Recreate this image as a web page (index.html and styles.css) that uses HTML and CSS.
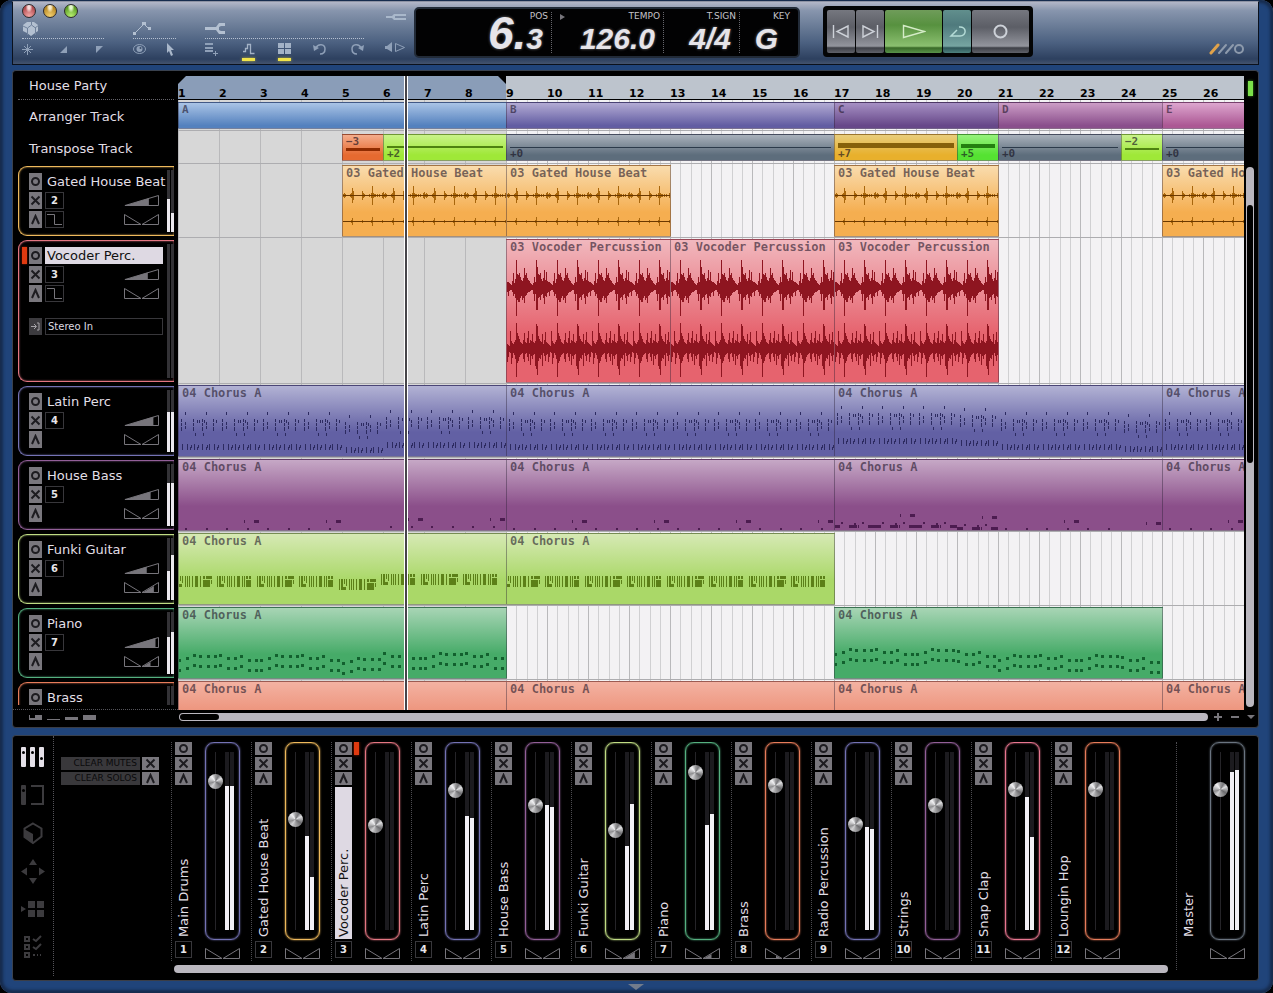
FILE: index.html
```html
<!DOCTYPE html>
<html lang="en">
<head>
<meta charset="utf-8">
<title>House Party</title>
<link rel="stylesheet" href="styles.css">
</head>
<body>
<div class="app">
  <header class="topbar">
    <div class="tools">
      <div class="tools-main">
        <div class="lights">
          <button class="light light-red" aria-label="Close"></button>
          <button class="light light-amber" aria-label="Minimise"></button>
          <button class="light light-green" aria-label="Zoom"></button>
        </div>
        <div class="groups">
          <div class="group group-a">
            <div class="group-head">
              <svg width="18" height="14" viewBox="0 0 18 14"><path fill="#b3c0d1" d="M1 3l4-3h7l4 3v6l-3 2-4 3-4-3-4-2z"/><path fill="none" stroke="#6f819b" d="M5.500 13V6l4-3 4 3v7M1 4l4 2M9.500 3V0M13 6l4-3"/></svg>
            </div>
            <div class="group-row">
              <button class="tool" aria-label="New"><svg width="11" height="11" viewBox="0 0 11 11"><path stroke="#8fa0b8" d="M5.500 0v11M0 5.500h11M2 2l7 7M9 2l-7 7"/></svg></button>
              <button class="tool" aria-label="Fade in"><svg width="11" height="11" viewBox="0 0 11 11"><path fill="#8fa0b8" d="M9 2v7H2z"/></svg></button>
              <button class="tool" aria-label="Fade out"><svg width="11" height="11" viewBox="0 0 11 11"><path fill="#8fa0b8" d="M3 2h7L3 9z"/></svg></button>
            </div>
          </div>
          <div class="group group-b">
            <div class="group-head">
              <svg width="18" height="14" viewBox="0 0 18 14"><path fill="none" stroke="#b3c0d1" d="M2 11l9-9 5 5"/><path fill="#b3c0d1" d="M0 10h3v3H0zM9 0h4v3H9zM15 5h3v3h-3z"/></svg>
            </div>
            <div class="group-row">
              <button class="tool" aria-label="View"><svg width="13" height="12" viewBox="0 0 13 12"><ellipse cx="6.500" cy="6" rx="6" ry="4.500" fill="none" stroke="#8fa0b8"/><circle cx="6.500" cy="6" r="3" fill="#8fa0b8"/><circle cx="7.500" cy="5" r="1" fill="#3b4e6a"/></svg></button>
              <button class="tool" aria-label="Select"><svg width="9" height="13" viewBox="0 0 9 13"><path fill="#a9b7ca" d="M1 0l7 7H5l2 5-2 1-2-5-2 2z"/></svg></button>
            </div>
          </div>
          <div class="group group-c">
            <div class="group-head">
              <svg width="21" height="14" viewBox="0 0 21 14"><path fill="#b3c0d1" d="M0 5h11l3-4h6v3h-4l-2 1v3l2 1h4v3h-6l-3-4H0z"/></svg>
            </div>
            <div class="group-row">
              <button class="tool" aria-label="Add to list"><svg width="14" height="14" viewBox="0 0 14 14"><path fill="#8fa0b8" d="M0 1h8v2H0zM0 5h8v2H0zM0 8h8v2H0zM10 9h1v5h-1zM8 11h5v1H8z"/></svg></button>
              <button class="tool tool-on" aria-label="Automation"><svg width="13" height="12" viewBox="0 0 13 12"><path fill="none" stroke="#a3b2c6" stroke-width="1.300" d="M1 8.500h2.500v-3h2v-4h3v9h4"/></svg></button>
              <button class="tool tool-on" aria-label="Snap"><svg width="13" height="12" viewBox="0 0 13 12"><path fill="#a3b2c6" d="M0 0h6v5H0zM7 0h6v5H7zM0 6h6v5H0zM7 6h6v5H7z"/></svg></button>
              <button class="tool" aria-label="Undo"><svg width="14" height="13" viewBox="0 0 14 13"><path fill="none" stroke="#8fa0b8" stroke-width="1.500" d="M3 5c2-5 9-4 9 1 0 4-3 5-5 5"/><path fill="#8fa0b8" d="M0 2l1 6 5-3z"/></svg></button>
              <button class="tool" aria-label="Redo"><svg width="14" height="13" viewBox="0 0 14 13"><path fill="none" stroke="#8fa0b8" stroke-width="1.500" d="M11 5C9 0 2 1 2 6c0 4 3 5 5 5"/><path fill="#8fa0b8" d="M14 2l-1 6-5-3z"/></svg></button>
            </div>
          </div>
        </div>
      </div>
      <div class="tools-side">
        <button class="tool" aria-label="Plug"><svg width="20" height="9" viewBox="0 0 20 9"><path fill="#a9b8cb" d="M0 3h6l2-2h12v2H9v2h11v2H8L6 5H0z"/></svg></button>
        <button class="tool" aria-label="Preview"><svg width="21" height="11" viewBox="0 0 21 11"><path fill="#8fa0b8" d="M0 4h2l5-4v10L2 7H0z"/><path fill="none" stroke="#8fa0b8" d="M10.500 1.500l9 4-9 4z"/></svg></button>
      </div>
    </div>

    <div class="lcd">
      <div class="lcd-cell lcd-pos"><span class="lcd-label">POS</span><span class="lcd-value"><b class="lcd-big">6.</b>3</span></div>
      <div class="lcd-cell lcd-tempo"><span class="lcd-label"><i class="lcd-play"></i>TEMPO</span><span class="lcd-value">126.0</span></div>
      <div class="lcd-cell lcd-sign"><span class="lcd-label">T.SIGN</span><span class="lcd-value">4/4</span></div>
      <div class="lcd-cell lcd-key"><span class="lcd-label">KEY</span><span class="lcd-value">G</span></div>
    </div>

    <div class="transport">
      <button class="tbtn" aria-label="Previous"><svg width="18" height="15" viewBox="0 0 18 15"><path fill="none" stroke="#cdd1d8" stroke-width="1.400" d="M1.500 1v13M16 2v11L5 7.500z"/></svg></button>
      <button class="tbtn" aria-label="Next"><svg width="18" height="15" viewBox="0 0 18 15"><path fill="none" stroke="#cdd1d8" stroke-width="1.400" d="M16.500 1v13M2 2v11l11-5.500z"/></svg></button>
      <button class="tbtn tbtn-wide tbtn-play" aria-label="Play"><svg width="24" height="15" viewBox="0 0 24 15"><path fill="none" stroke="#d5ecc8" stroke-width="1.400" d="M1.500 1.500v12l21-6z"/></svg></button>
      <button class="tbtn tbtn-loop" aria-label="Loop"><svg width="19" height="15" viewBox="0 0 19 15"><path fill="none" stroke="#b4dbd6" stroke-width="1.500" d="M11 3c8-1 8 9 1 9H3l6-6"/></svg></button>
      <button class="tbtn tbtn-wide" aria-label="Record"><svg width="15" height="15" viewBox="0 0 15 15"><circle cx="7.500" cy="7.500" r="6" fill="none" stroke="#cdd1d8" stroke-width="2"/></svg></button>
    </div>
    <svg class="logo" width="36" height="12" viewBox="0 0 36 12"><g fill="none" stroke-linecap="round"><path stroke="#e0a24a" stroke-width="3" d="M2 10l7-8"/><path stroke="#8d9aac" stroke-width="2" d="M10 10l7-8M17 10l7-8"/><circle cx="30" cy="6" r="4" stroke="#8d9aac" stroke-width="2"/></g></svg>
  </header>

  <main class="panel arrange">
    <aside class="heads">
      <h1 class="head-line head-song">House Party</h1>
      <div class="head-line head-arranger">Arranger Track</div>
      <div class="head-line head-transpose">Transpose Track</div>
      <div class="head-list" id="heads"></div>
    </aside>
    <section class="timeline">
      <div class="ruler" id="ruler"></div>
      <div class="lane lane-arranger" id="arranger"></div>
      <div class="lane lane-transpose" id="transpose"></div>
      <div class="lanes" id="lanes"></div>
      <div class="playhead"></div>
    </section>
    <div class="side">
      <div class="led"></div>
      <div class="vscroll"><div class="vthumb"></div></div>
    </div>
    <div class="sizes">
      <svg width="68" height="5" viewBox="0 0 68 5"><path fill="#77757b" d="M0 0h1v3h5V0h7v5H0zM18 4h13v1H18zM36 2h13v3H36zM54 0h13v5H54z"/></svg>
    </div>
    <div class="hscroll"><div class="hthumb"></div></div>
    <div class="zooms">
      <button class="zbtn" aria-label="Zoom in"><svg width="8" height="8" viewBox="0 0 8 8"><path fill="#77757b" d="M3 0h2v3h3v2H5v3H3V5H0V3h3z"/></svg></button>
      <button class="zbtn" aria-label="Zoom out"><svg width="8" height="8" viewBox="0 0 8 8"><path fill="#77757b" d="M0 3h8v2H0z"/></svg></button>
      <button class="zbtn" aria-label="More"><svg width="8" height="8" viewBox="0 0 8 8"><path fill="#77757b" d="M0 2h8L4 6z"/></svg></button>
    </div>
  </main>

  <section class="panel mixer">
    <nav class="tabs">
      <button class="tab" aria-label="Mixer"><svg width="24" height="20" viewBox="0 0 24 20"><g fill="#e4e0e8"><rect width="5" height="20" rx="1"/><rect x="9" width="5" height="20" rx="1"/><rect x="18" width="5" height="20" rx="1"/></g><g fill="#000"><circle cx="2.500" cy="5.500" r="1.500"/><circle cx="11.500" cy="5.500" r="1.500"/><circle cx="20.500" cy="11.500" r="1.500"/></g></svg></button>
      <button class="tab" aria-label="Channel"><svg width="24" height="20" viewBox="0 0 24 20"><rect width="5" height="20" rx="1" fill="#3c3b3e"/><circle cx="2.500" cy="5.500" r="1.500"/><path fill="none" stroke="#3c3b3e" stroke-width="2" d="M10 1h12v18H10"/></svg></button>
      <button class="tab" aria-label="Devices"><svg width="20" height="23" viewBox="0 0 20 23"><path fill="none" stroke="#3c3b3e" stroke-width="2" d="M10 1.500l8.500 5v8L10 21 1.500 15V6.500z"/><path fill="#3c3b3e" d="M1 7l9 5v10l-9-7z"/></svg></button>
      <button class="tab" aria-label="Move"><svg width="24" height="25" viewBox="0 0 24 25"><path fill="#3c3b3e" d="M12 0l4 6H8zM12 25l4-6H8zM0 12.500l6-4v8zM24 12.500l-6-4v8z"/></svg></button>
      <button class="tab" aria-label="Pads"><svg width="24" height="16" viewBox="0 0 24 16"><path fill="#3c3b3e" d="M0 5l5 3-5 3zM7 0h7v7H7zM16 0h7v7h-7zM7 9h7v7H7zM16 9h7v7h-7z"/></svg></button>
      <button class="tab" aria-label="Checklist"><svg width="20" height="24" viewBox="0 0 20 24"><path fill="none" stroke="#3c3b3e" stroke-width="2" d="M2 2h4v4H2zM2 10h4v4H2zM2 18h4v4H2zM10 4l3 2 5-5M10 12l3 2 5-5M10 20h2M14 20h1M17 20h1"/></svg></button>
    </nav>
    <div class="clears">
      <button class="clear"><span class="clear-text">CLEAR MUTES</span><span class="chip" data-glyph="x"></span></button>
      <button class="clear"><span class="clear-text">CLEAR SOLOS</span><span class="chip" data-glyph="a"></span></button>
    </div>
    <div class="desk">
      <div class="strips" id="strips"></div>
      <div class="mscroll"></div>
    </div>
    <div class="master" id="master"></div>
  </section>
  <button class="collapse" aria-label="Collapse"><svg width="16" height="6" viewBox="0 0 16 6"><path fill="#727c8c" d="M0 0h16L8 6z"/></svg></button>
</div>
<script src="app.js"></script>
</body>
</html>
```
FILE: styles.css
```css
* { box-sizing: border-box; }
body {
  margin: 0;
  background: #000;
  font-family: "DejaVu Sans", "Noto Sans", sans-serif;
  color: #e2dfe6;
}
button { padding: 0; border: 0; background: none; color: inherit; font: inherit; display: flex; align-items: center; justify-content: center; }
svg { display: block; }

.app {
  height: 100vh;
  display: flex;
  flex-direction: column;
  padding: 1px 14px 0 12px;
  border-radius: 12px;
  background: #20447a;
  box-shadow: inset 0 0 3px 3px #162b4d, inset 0 0 0 1px #4a5a72;
  overflow: hidden;
}

/* top bar */
.topbar {
  flex: none;
  height: 64px;
  display: flex;
  align-items: flex-start;
  border: 1px solid #0b111c;
  border-top-color: #8e93a4;
  background: linear-gradient(#b3b7c8 0, #8795ad 14%, #697b96 40%, #4b6080 66%, #2d405f 92%, #43536e 100%);
  padding-top: 1px;
}
.tools { width: 401px; display: flex; justify-content: space-between; padding: 0 8px 0 9px; }
.tools-main { width: 342px; }
.lights { display: flex; gap: 7px; height: 19px; padding: 1px 0 0 0; }
.light { width: 14px; height: 14px; border: 1px solid #2c2a2c; border-radius: 50%; }
.light-red { background: radial-gradient(ellipse at 50% 18%, #f7dcdc 0 14%, transparent 40%), radial-gradient(circle at 50% 90%, #f0a6a6, #b34c50 70%); }
.light-amber { background: radial-gradient(ellipse at 50% 18%, #f8ecca 0 14%, transparent 40%), radial-gradient(circle at 50% 90%, #f2cf70, #b98a26 70%); }
.light-green { background: radial-gradient(ellipse at 50% 18%, #e4f8cc 0 14%, transparent 40%), radial-gradient(circle at 50% 90%, #b6ee70, #5fa028 70%); }
.groups { display: flex; gap: 29px; }
.group-a { width: 82px; }
.group-b { width: 43px; }
.group-c { width: 159px; }
.group-head { height: 17px; border-bottom: 1px dotted #b6c1d1; }
.group-row { display: flex; justify-content: space-between; padding-top: 3px; }
.tool { height: 14px; min-width: 11px; position: relative; }
.tool-on::after {
  content: "";
  position: absolute;
  left: 0; right: 0; top: 16px;
  height: 3px;
  background: #f0e34a;
  box-shadow: 0 0 3px #b8b040;
}
.tools-side { display: flex; flex-direction: column; justify-content: space-between; padding: 7px 0 2px; }

.lcd {
  width: 386px;
  height: 51px;
  margin-top: 4px;
  display: flex;
  background: #020203;
  border: 2px solid #222b38;
  border-radius: 5px;
  padding: 3px 8px 0 0;
}
.lcd-cell { height: 41px; display: flex; flex-direction: column; align-items: flex-end; border-right: 1px dotted #66666c; padding-right: 3px; }
.lcd-cell:last-child { border-right: 0; padding-right: 0; }
.lcd-pos { flex: 1; }
.lcd-tempo { width: 112px; }
.lcd-sign { width: 76px; }
.lcd-key { width: 50px; }
.lcd-label { flex: none; display: flex; align-items: center; align-self: stretch; justify-content: flex-end; font-size: 9px; line-height: 9px; color: #c4c3c8; }
.lcd-play { margin: 0 auto 0 8px; border: 3px solid transparent; border-left: 5px solid #77757b; border-right: 0; }
.lcd-value {
  font-family: "Liberation Sans", Arial, sans-serif;
  font-style: italic;
  font-weight: bold;
  font-size: 30px;
  line-height: 36px;
  padding-right: 5px;
  color: #e6e4e9;
  text-shadow: 0 0 3px #77777c;
}
.lcd-key .lcd-value { padding-right: 12px; }
.lcd-big { font-size: 46px; line-height: 0; }

.transport {
  margin: 3px 0 0 23px;
  display: flex;
  gap: 1px;
  padding: 4px;
  height: 51px;
  background: #040506;
  border-radius: 4px;
}
.tbtn { width: 28px; background: linear-gradient(#75777f, #5c5e66 40%, #93959d 84%, #3e4047 88%, #60626a); border-radius: 2px; }
.tbtn-wide { width: 57px; }
.tbtn-play { background: linear-gradient(#6f9c5a, #57913f 35%, #8bc070 84%, #396a28 88%, #59934a); }
.tbtn-loop { background: linear-gradient(#618f8d, #4f7a7d 35%, #76a5a2 84%, #2f5659 88%, #4e827e); }
.logo { margin: 40px 13px 0 auto; }

/* panels */
.panel { background: #000; border: 1px solid #39414e; border-bottom-color: #3a3d46; border-radius: 4px; }
.arrange {
  flex: 1;
  min-height: 0;
  margin-top: 5px;
  padding-top: 5px;
  display: grid;
  grid-template-columns: 165px minmax(0, 1fr) 14px;
  grid-template-rows: minmax(0, 1fr) 17px;
}
.heads { display: flex; flex-direction: column; min-height: 0; padding: 0 4px 4px 5px; border-bottom: 1px dotted #55545a; }
.head-line { margin: 0; flex: none; font-size: 13px; font-weight: normal; padding-left: 11px; display: flex; align-items: center; }
.head-song { height: 24px; border-bottom: 1px dotted #66656c; padding-bottom: 4px; }
.head-arranger { height: 32px; }
.head-transpose { height: 33px; }
.head-list { flex: 1; min-height: 0; overflow: hidden; }

.track { height: 74px; padding: 1px 0 3px; }
.track-tall { height: 146px; }
.track-box {
  height: 100%;
  display: flex;
  border: 1px solid var(--tone);
  border-right: 0;
  border-radius: 9px 0 0 9px;
  padding: 3px 0 3px 3px;
  box-shadow: inset 0 0 2px var(--tone);
}
.armed { flex: none; width: 5px; height: 17px; margin: 3px 2px 0 0; background: transparent; }
.armed-on { background: #e03a10; box-shadow: 0 0 2px #a02000; }
.track-main { flex: 1; min-width: 0; display: grid; grid-template-columns: 13px 19px minmax(0, 1fr) 35px; column-gap: 3px; row-gap: 2px; grid-auto-rows: 17px; align-content: start; align-items: center; padding-top: 3px; padding-right: 8px; }
.track-name { grid-column: 2 / -1; font-size: 13px; line-height: 17px; padding-left: 2px; white-space: nowrap; margin-right: -6px; color: #e2dfe6; }
input.track-name { width: 118px; height: 17px; margin: 0 -6px 0 0; border: 0; background: #ded9e3; color: #111; font-family: inherit; padding: 0 0 0 2px; }
.chip { background: #79777d; display: flex; align-items: center; justify-content: center; height: 17px; }
.box { height: 17px; border: 1px solid #38373b; display: flex; align-items: center; justify-content: center; font-size: 10px; font-weight: bold; color: #e8e6ea; }
.icon-end { grid-column: 4; }
.input-row { grid-column: 1 / -1; display: flex; gap: 3px; margin-top: 14px; margin-right: -6px; margin-bottom: -14px; }
.input-row .chip { flex: none; width: 13px; background: #3c3b3f; }
.input-pick { flex: none; appearance: none; width: 118px; height: 17px; border: 1px solid #38373b; border-radius: 0; background: #000; color: #dddbe0; font: 10px "DejaVu Sans", sans-serif; padding: 0 2px; }
.meter { flex: none; display: flex; gap: 1px; }
.meter-bar { width: 3px; background: #333236; display: flex; align-items: flex-end; }
.meter-fill { width: 100%; background: #ebe8ee; }

/* timeline */
.timeline { position: relative; display: flex; flex-direction: column; min-height: 0; overflow: hidden; background: #f3f2f4; }
.ruler, .lane { display: grid; grid-template-columns: repeat(27, 41px); flex: none; }
.ruler {
  height: 24px;
  border-bottom: 1px solid #000;
  background: linear-gradient(90deg, #8a9db8 328px, #bdc4cd 328px);
  font-size: 11px;
  font-weight: bold;
  line-height: 11px;
  color: #000;
  align-items: end;
}
.ruler::before, .ruler::after { content: ""; position: absolute; top: 0; border: 4px solid transparent; border-top-color: #000; }
.ruler::before { left: 0; border-left-color: #000; }
.ruler::after { left: 320px; border-right-color: #000; }
.lane {
  background:
    linear-gradient(#adadb0, #adadb0) 0 calc(100% - 1px) / 100% 1px no-repeat,
    linear-gradient(90deg, #b9b9bb 1px, transparent 1px) 0 0 / 41px 100%,
    linear-gradient(90deg, #d7d7d7 328px, transparent 328px),
    linear-gradient(90deg, transparent 10px, #d0d0d2 10px 11px, transparent 11px 21px, #d0d0d2 21px 22px, transparent 22px 31px, #d0d0d2 31px 32px, transparent 32px) 0 0 / 41px 100%,
    #f3f2f4;
}
.lane-arranger { height: 32px; padding: 2px 0 3px; }
.lane-transpose { height: 33px; padding: 2px 0 4px; }
.lane-track { height: 74px; padding-bottom: 2px; }
.lane-tall { height: 146px; }
.lanes { flex: 1; min-height: 0; overflow: hidden; }
.clip {
  position: relative;
  overflow: hidden;
  border: 1px solid rgba(40, 30, 50, .4);
  border-right-width: 0;
  background: linear-gradient(var(--hi), var(--lo) 66%);
  font: bold 12px "DejaVu Sans Mono", "Liberation Mono", monospace;
  color: rgba(30, 20, 40, .6);
}
.clip-end { border-right-width: 1px; margin-right: -1px; }
.clip-label { display: block; padding: 0 0 0 3px; line-height: 14px; white-space: nowrap; }
.clip-art { position: absolute; left: -1px; top: -1px; }
.section { background: linear-gradient(var(--hi), var(--lo) 90%); font-size: 11px; }
.shift { display: flex; flex-direction: column; padding: 0 3px; background: linear-gradient(var(--hi), var(--lo) 80%); font-size: 11px; line-height: 12px; color: rgba(20, 15, 30, .65); }
.shift-up { padding-top: 13px; }
.shift-down { padding-top: 1px; }
.shift-bar { flex: none; background: var(--ink); }
.shift-up .shift-bar { margin-top: calc(0px - var(--size)); height: var(--size); }
.shift-down .shift-bar { height: var(--size); }
.playhead { position: absolute; top: 0; bottom: 0; left: 226px; width: 4px; background: #47454a; border: 1px solid #fff; border-width: 0 1px; }

.side { display: flex; flex-direction: column; align-items: flex-start; padding: 4px 0 3px 2px; }
.led { width: 5px; height: 15px; margin: 1px 0 0 2px; background: #7be04a; box-shadow: 0 0 3px #3d9020; }
.vscroll { flex: 1; width: 8px; margin-top: 71px; border-radius: 4px; background: #bab7bf; padding: 38px 1px 0; }
.vthumb { height: 258px; border-radius: 3px; background: #000; }
.sizes { padding: 5px 0 0 16px; }
.hscroll { grid-column: 2; height: 8px; margin: 3px 36px 0 1px; border-radius: 4px; background: #bab7bf; padding: 1px; }
.hthumb { width: 39px; height: 6px; border-radius: 3px; background: #000; }
.zooms { grid-column: 3; width: 41px; margin-left: -30px; height: 14px; display: flex; align-items: center; justify-content: space-between; }

/* mixer */
.mixer { flex: none; height: 246px; margin-top: 7px; display: flex; }
.tabs { width: 41px; padding-top: 2px; border-right: 1px dotted #55545a; display: flex; flex-direction: column; margin: 0 0 4px; }
.tab { height: 38px; width: 40px; }
.clears { width: 117px; padding: 21px 0 0 7px; display: flex; flex-direction: column; gap: 2px; }
.clear { gap: 2px; justify-content: flex-start; }
.clear-text { width: 79px; height: 13px; padding-right: 3px; background: #39383b; color: #0a0a0b; font-size: 9px; line-height: 13px; text-align: right; white-space: nowrap; }
.clear .chip, .strip .chip { width: 17px; height: 13px; }
.desk { flex: 1; min-width: 0; display: flex; flex-direction: column; padding-top: 6px; }
.strips { display: flex; overflow: hidden; }
.strip { flex: none; width: 80px; height: 219px; display: flex; gap: 13px; padding-left: 3px; border-left: 1px dotted #4c4b50; position: relative; }
.strip-left { width: 17px; display: flex; flex-direction: column; gap: 2px; padding-bottom: 3px; }
.strip-name { flex: 1; min-height: 0; display: flex; writing-mode: vertical-rl; transform: rotate(180deg); font-size: 13px; line-height: 17px; padding-top: 2px; white-space: nowrap; }
.strip-picked { background: #ded9e3; color: #111; }
.strip-armed { position: absolute; left: 22px; top: 0; width: 5px; height: 13px; background: #e03a10; box-shadow: 0 0 3px #a02000; }
.box-space { height: 17px; }
.strip-right { display: flex; flex-direction: column; gap: 8px; }
.fader { width: 35px; height: 198px; display: flex; gap: 2px; padding: 9px 0 9px 2px; border: 1px solid var(--tone); border-radius: 9px; box-shadow: 0 0 2px var(--tone), inset 0 0 2px var(--tone); }
.fader-slide {
  appearance: none;
  writing-mode: vertical-lr;
  direction: rtl;
  width: 15px;
  height: 178px;
  margin: 0;
  background: linear-gradient(#252428, #252428) 7px 0 / 1px 100% no-repeat;
}
.fader-slide::-webkit-slider-thumb {
  appearance: none;
  width: 15px;
  height: 15px;
  border-radius: 50%;
  border: 0;
  background: conic-gradient(from 0deg, #9a9a9c, #77777a 8%, #e0e0e2 17%, #a6a6a8 25%, #6b6b6e 34%, #a2a2a4 50%, #d0d0d2 60%, #8e8e90 70%, #c4c4c6 80%, #f0f0f2 90%, #9a9a9c);
}
.fader .meter-bar { width: 4px; background: #1c1b1f; }
.fader .meter-fill { background: #f2f0f6; }
.mscroll { height: 8px; margin: 4px 8px 0 3px; border-radius: 4px; background: #bab7bf; }
.master { width: 82px; padding-top: 6px; }
.master .strip { height: 228px; padding-bottom: 9px; }
.collapse { flex: none; height: 12px; }
```
FILE: app.js
```js
const BAR = 41;
const LAST = 28;

const GLYPHS = {
  o: '<svg width="11" height="11" viewBox="0 0 11 11"><circle cx="5.500" cy="5.500" r="3.500" fill="none" stroke="#1d1c20" stroke-width="2"/></svg>',
  x: '<svg width="11" height="11" viewBox="0 0 11 11"><path stroke="#1d1c20" stroke-width="2" d="M1.500 1.500l8 8M9.500 1.500l-8 8"/></svg>',
  a: '<svg width="11" height="11" viewBox="0 0 11 11"><path fill="none" stroke="#1d1c20" stroke-width="2" d="M2 10l3.500-8L9 10"/></svg>',
  in: '<svg width="9" height="9" viewBox="0 0 9 9"><path fill="none" stroke="#a5a3a8" d="M0 4.500h5M3 2l2.500 2.500L3 7M6 1h2v7H6"/></svg>',
  env: '<svg width="17" height="13" viewBox="0 0 17 13"><path fill="none" stroke="#77757b" d="M1 1.500h7.500v10H16"/></svg>'
};
const chip = (g, label) => `<button class="chip" aria-label="${label}">${GLYPHS[g]}</button>`;

const volume = v => `<svg class="icon-end" width="35" height="11" viewBox="0 0 35 11"><path fill="none" stroke="#77757b" d="M1 10.500L34.500.500v10z"/><path fill="#77757b" d="M0 11L${35 * v} ${11 - 11 * v}V11z"/></svg>`;
const pan = (side, v) => {
  let fill = '';
  if (side === 'r') fill = `<path fill="#77757b" d="M18 11l${17 * v}-${10 * v}V11z"/>`;
  if (side === 'l') fill = `<path fill="#77757b" d="M17 11L${17 - 10 * v} ${11 - 6 * v}V11z"/>`;
  return `<svg class="icon-end" width="35" height="11" viewBox="0 0 35 11"><path fill="none" stroke="#77757b" d="M.500.500v10H17zM34.500.500v10H18z"/>${fill}</svg>`;
};
const meter = levels => `<div class="meter">${levels.map(l => `<div class="meter-bar"><div class="meter-fill" style="height:${l}%"></div></div>`).join('')}</div>`;

/* Arrangement data */
const SECTIONS = [
  ['A', 1, 9, '#aac4e6', '#5481be'], ['B', 9, 17, '#b3abd4', '#625da2'], ['C', 17, 21, '#a690c4', '#674889'],
  ['D', 21, 25, '#cc9dc6', '#8a4f8c'], ['E', 25, LAST, '#dda6cf', '#ac5894']
];
const SHIFTS = [
  [-3, 5, 6, 3], [2, 6, 9, 2], [0, 9, 17, 1], [7, 17, 20, 5], [5, 20, 21, 4], [0, 21, 24, 1], [-2, 24, 25, 2], [0, 25, LAST, 1]
];
const SHIFT_TONES = {
  '-3': ['#f4ad8c', '#e66a30', '#8f2b00'], '2': ['#c9f38a', '#9fe838', '#4e8210'], '0': ['#a9b1bb', '#5d6d7c', '#2c3a4a'],
  '7': ['#e8cd7c', '#e8b02c', '#86600a'], '5': ['#96f27c', '#55e232', '#248010'], '-2': ['#c9f38a', '#9fe838', '#4e8210']
};
const TONES = {
  orange: ['#f9dcae', '#f5ae50', '#eeb95c'], red: ['#f1b8be', '#e6636e', '#e47682'], blue: ['#b2b2d4', '#6260a4', '#7472b4'],
  purple: ['#c6a8c6', '#8b4f8a', '#925f98'], lime: ['#d6e9b4', '#aad868', '#c0dc84'], green: ['#a8d5b5', '#46ab68', '#55b080'],
  salmon: ['#f3b2a2', '#ea8468', '#e67c5a'], pink: ['', '', '#e87690'], grey: ['', '', '#6a7480']
};
const TRACKS = [
  { n: 2, name: 'Gated House Beat', tone: 'orange', clip: '03 Gated House Beat', art: 'beat', spans: [[5, 9], [9, 13], [17, 21], [25, LAST]], levels: [54, 31], vol: .71, env: true },
  { n: 3, name: 'Vocoder Perc.', tone: 'red', clip: '03 Vocoder Percussion', art: 'voc', spans: [[9, 13], [13, 17], [17, 21]], levels: [0, 0], vol: .68, env: true, picked: true },
  { n: 4, name: 'Latin Perc', tone: 'blue', clip: '04 Chorus A', art: 'latin', spans: [[1, 9], [9, 17], [17, 25], [25, LAST]], levels: [65, 64], vol: .84 },
  { n: 5, name: 'House Bass', tone: 'purple', clip: '04 Chorus A', art: 'bass', spans: [[1, 9], [9, 17], [17, 25], [25, LAST]], levels: [70, 70], vol: .76 },
  { n: 6, name: 'Funki Guitar', tone: 'lime', clip: '04 Chorus A', art: 'guitar', spans: [[1, 9], [9, 17]], levels: [47, 72], vol: .65, pan: ['r', .7] },
  { n: 7, name: 'Piano', tone: 'green', clip: '04 Chorus A', art: 'piano', spans: [[1, 9], [17, 25]], levels: [60, 67], vol: .9, pan: ['r', .5] },
  { n: 8, name: 'Brass', tone: 'salmon', clip: '04 Chorus A', art: '', spans: [[1, 9], [9, 17], [17, 25], [25, LAST]], levels: [0, 0], folded: true }
];

/* Waveform peaks, one value per pixel of a bar */
const PEAKS = {
  beatTop: [3, 1, 2, 1, 0, 0, 0, 0, 1, 2, 7, 4, 0, 0, 0, 0, 0, 0, 0, 0, 4, 2, 1, 0, 0, 0, 0, 1, 0, 2, 9, 2, 1, 1, 0, 1, 0, 1, 0, 0, 2],
  beatLow: [0, 0, 0, 0, 0, 0, 0, 0, 0, 1, 3, 0, 0, 0, 0, 0, 0, 0, 0, 0, 1, 0, 0, 0, 0, 0, 0, 0, 0, 1, 4, 0, 0, 0, 0, 0, 0, 0, 0, 0, 1],
  vocTopUp: [6, 5, 5, 4, 3, 2, 6, 14, 4, 8, 27, 13, 12, 14, 10, 7, 6, 9, 19, 12, 14, 9, 7, 6, 4, 3, 2, 4, 10, 5, 27, 20, 13, 12, 14, 8, 6, 9, 17, 7, 15],
  vocTopDown: [5, 4, 8, 3, 2, 2, 4, 8, 6, 10, 28, 12, 14, 14, 10, 8, 12, 10, 15, 8, 7, 5, 4, 4, 3, 2, 2, 6, 13, 6, 22, 22, 10, 9, 12, 7, 6, 10, 16, 8, 9],
  vocLowUp: [5, 4, 3, 2, 17, 7, 5, 4, 6, 8, 25, 15, 12, 9, 6, 5, 4, 8, 15, 6, 5, 10, 17, 5, 8, 7, 14, 6, 5, 7, 24, 22, 12, 9, 7, 6, 14, 4, 8, 16, 6],
  vocLowDown: [5, 13, 8, 3, 4, 15, 9, 4, 6, 10, 28, 14, 12, 8, 6, 5, 4, 10, 13, 5, 4, 8, 12, 5, 16, 7, 10, 6, 5, 17, 20, 26, 12, 9, 10, 6, 17, 4, 7, 12, 6]
};
function wave(width, mid, up, down) {
  let d = '';
  for (let x = 0; x < width; x++) d += `M${x + .5} ${mid - up[x % BAR]}V${mid + 1 + down[x % BAR]}`;
  return d;
}

const shiftAt = bar => {
  const s = SHIFTS.find(([, from, to]) => bar >= from && bar < to);
  return s ? Math.round(-s[0] * .85) : 0;
};
const GUITAR = [[0, 0, 1, 11], [2, 0, 2, 11], [4, 8, 3, 3], [5, 0, 1, 5], [7, 0, 1, 7], [10, 0, 1, 11], [12, 0, 1, 11], [14, 0, 1, 11], [17, 0, 1, 11], [20, 0, 3, 11], [25, 0, 1, 11]];
const NOTES = {
  latin() {
    const n = [[7, 27, 1, 3], [28, 27, 1, 3], [17, 48, 1, 3], [25, 48, 1, 3]];
    [7, 28].forEach(x => n.push([x, 37, 1, 3], [x, 41, 1, 3]));
    [3, 15, 24, 35].forEach(x => n.push([x, 34, 1, 3], [x, 38, 1, 3], [x, 42, 1, 4]));
    [19, 21, 26, 38].forEach(x => n.push([x, 35, 1, 3]));
    [4, 9, 16, 24, 31, 36].forEach(x => n.push([x, 59, 1, 6]));
    [12, 19, 28, 39].forEach(x => n.push([x, 62, 1, 3], [x + 1, 60, 1, 3]));
    return n;
  },
  bass(bar) {
    const n = [[7, 69, 2, 2], [28, 69, 2, 2]];
    if (bar % 2 === 0) n.push([25, 61, 1, 3], [35, 61, 5, 3]);
    if (bar >= 17 && bar < 21) n.push([0, 72, 6, 3], [15, 72, 8, 3], [20, 70, 2, 3], [24, 72, 1, 3], [34, 72, 7, 3]);
    return n;
  },
  guitar(bar) {
    const odd = bar % 2 === 1;
    const start = odd ? -3 : -2;
    const n = GUITAR.map(([x, y, w, h]) => [x + start, y + 43, w, h]);
    if (odd) n.push([28 + start, 43, 2, 3], [31 + start, 43, 6, 3], [28 + start, 47, 7, 7], [36 + start, 47, 1, 4]);
    else n.push([27 + start, 43, 1, 11], [29 + start, 43, 2, 3], [32 + start, 43, 2, 3], [29 + start, 47, 5, 7]);
    return n;
  },
  piano(bar) {
    const pts = bar % 2 ? [[0, 52], [8, 50], [15, 47], [21, 48], [29, 48], [36, 48]] : [[0, 47], [8, 50], [15, 50], [21, 48], [29, 52], [36, 52]];
    return pts.flatMap(([x, y]) => [[x, y, 3, 3], [x, y + 10, 3, 3]]);
  }
};
const INK = { latin: '#2c2a60', bass: '#4c1c50', guitar: '#5c8018', piano: '#12602e' };

function art(kind, from, to) {
  const w = (to - from) * BAR;
  const open = h => `<svg class="clip-art" width="${w}" height="${h}" shape-rendering="crispEdges" aria-hidden="true">`;
  if (kind === 'beat') {
    return `${open(72)}<path stroke="#a8660c" d="${wave(w, 30, PEAKS.beatTop, PEAKS.beatTop)}${wave(w, 56, PEAKS.beatLow, PEAKS.beatLow)}"/><path stroke="#6a3800" d="M0 30.500H${w}M0 56.500H${w}"/></svg>`;
  }
  if (kind === 'voc') {
    return `${open(144)}<path stroke="#8e1520" d="${wave(w, 48, PEAKS.vocTopUp, PEAKS.vocTopDown)}${wave(w, 109, PEAKS.vocLowUp, PEAKS.vocLowDown)}"/></svg>`;
  }
  if (!NOTES[kind]) return '';
  let d = '';
  for (let bar = from; bar < to; bar++) {
    const dy = shiftAt(bar);
    for (const [x, y, nw, nh] of NOTES[kind](bar)) d += `M${x + (bar - from) * BAR} ${y + dy}h${nw}v${nh}h-${nw}z`;
  }
  return `${open(71)}<path fill="${INK[kind]}" d="${d}"/></svg>`;
}

const place = (from, to, hi, lo) => `grid-column:${from}/${Math.min(to, LAST)};--hi:${hi};--lo:${lo}`;

document.getElementById('ruler').innerHTML = Array.from({ length: 26 }, (_, i) => `<span>${i + 1}</span>`).join('');
document.getElementById('arranger').innerHTML = SECTIONS.map(([t, a, b, hi, lo]) =>
  `<div class="clip section" style="${place(a, b, hi, lo)}"><span class="clip-label">${t}</span></div>`).join('');
document.getElementById('transpose').innerHTML = SHIFTS.map(([v, a, b, size]) => {
  const [hi, lo, ink] = SHIFT_TONES[v];
  const bar = '<div class="shift-bar"></div>';
  const text = `<span>${v < 0 ? '−' + -v : '+' + v}</span>`;
  return `<div class="clip shift ${v < 0 ? 'shift-down' : 'shift-up'}" style="${place(a, b, hi, lo)};--ink:${ink};--size:${size}px">${v < 0 ? text + bar : bar + text}</div>`;
}).join('');

document.getElementById('lanes').innerHTML = TRACKS.map(t => {
  const [hi, lo] = TONES[t.tone];
  const clips = t.spans.map(([a, b], i) => {
    const joined = t.spans[i + 1] && t.spans[i + 1][0] === b;
    return `<div class="clip${joined ? '' : ' clip-end'}" style="${place(a, b, hi, lo)}">${art(t.art, a, b)}<span class="clip-label">${t.clip}</span></div>`;
  }).join('');
  return `<div class="lane lane-track${t.picked ? ' lane-tall' : ''}">${clips}</div>`;
}).join('');

const controls = t => `
      ${chip('x', 'Mute')}<span class="box">${t.n}</span>${volume(t.vol)}
      ${chip('a', 'Solo')}${t.env ? `<span class="box">${GLYPHS.env}</span>` : ''}${pan(...(t.pan || []))}
      ${t.picked ? `<div class="input-row">${chip('in', 'Input')}<select class="input-pick" aria-label="Track input"><option>Stereo In</option></select></div>` : ''}`;
document.getElementById('heads').innerHTML = TRACKS.map(t => `
  <div class="track${t.picked ? ' track-tall' : ''}"><div class="track-box" style="--tone:${TONES[t.tone][2]}">
    <div class="armed${t.picked ? ' armed-on' : ''}"></div>
    <div class="track-main">
      ${chip('o', 'Monitor')}${t.picked ? `<input class="track-name" aria-label="Track name" value="${t.name}">` : `<span class="track-name">${t.name}</span>`}
      ${t.folded ? '' : controls(t)}
    </div>
    ${meter(t.levels)}
  </div></div>`).join('');

/* Mixer: knob centre and meter tops are measured down the 178px fader slot */
const CHANNELS = [
  ['Main Drums', 'blue', 29, 33, 33], ['Gated House Beat', 'orange', 67, 84, 124], ['Vocoder Perc.', 'red', 73, 178, 178],
  ['Latin Perc', 'blue', 38, 64, 66], ['House Bass', 'purple', 53, 54, 55], ['Funki Guitar', 'lime', 78, 95, 51, ['r', .7]],
  ['Piano', 'green', 20, 73, 62, ['r', .5]], ['Brass', 'salmon', 33, 178, 178, ['l', .6]], ['Radio Percussion', 'blue', 72, 75, 77],
  ['Strings', 'purple', 53, 178, 178], ['Snap Clap', 'pink', 37, 45, 85], ['Loungin Hop', 'salmon', 37, 178, 178]
];
const strip = ([name, tone, knob, left, right, balance], n) => `
  <div class="strip">
    <div class="strip-left">
      ${n ? chip('o', 'Monitor') + chip('x', 'Mute') + chip('a', 'Solo') : ''}
      <span class="strip-name${n === 3 ? ' strip-picked' : ''}">${name}</span>
      ${n ? `<span class="box">${n}</span>` : '<span class="box-space"></span>'}
    </div>
    ${n === 3 ? '<span class="strip-armed"></span>' : ''}
    <div class="strip-right">
      <div class="fader" style="--tone:${TONES[tone][2]}">
        <input class="fader-slide" type="range" min="0" max="163" value="${163 - (knob - 7)}" aria-label="${name} level">
        ${meter([left, right].map(v => Math.round((178 - v) / 1.78)))}
      </div>
      ${pan(...(balance || []))}
    </div>
  </div>`;
document.getElementById('strips').innerHTML = CHANNELS.map((c, i) => strip(c, i + 1)).join('');
document.getElementById('master').innerHTML = strip(['Master', 'grey', 37, 19, 18], 0);
document.querySelectorAll('.chip[data-glyph]').forEach(el => { el.innerHTML = GLYPHS[el.dataset.glyph]; });
```
